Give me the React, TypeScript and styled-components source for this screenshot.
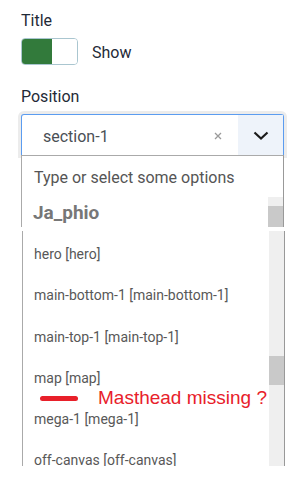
import * as React from "react";
import styled, { createGlobalStyle } from "styled-components";

const GlobalStyle = createGlobalStyle`
  html, body {
    margin: 0;
    padding: 0;
    background: #fff;
    font-family: Roboto, "Noto Sans", Arial, sans-serif;
  }
`;

const options = [
  "hero [hero]",
  "main-bottom-1 [main-bottom-1]",
  "main-top-1 [main-top-1]",
  "map [map]",
  "mega-1 [mega-1]",
  "off-canvas [off-canvas]",
];

const App = (): JSX.Element => {
  return (
    <>
      <GlobalStyle />
      <Page>
        <Label>Title</Label>
        <ToggleRow>
          <Toggle>
            <ToggleOn />
            <ToggleOff />
          </Toggle>
          <ToggleText>Show</ToggleText>
        </ToggleRow>

        <Label style={{ marginTop: 22 }}>Position</Label>
        <Select>
          <SelectValue>section-1</SelectValue>
          <ClearBtn>
            <svg width="8" height="8" viewBox="0 0 8 8">
              <path d="M1 1 L7 7 M7 1 L1 7" stroke="#9a9a9a" strokeWidth="1.3" />
            </svg>
          </ClearBtn>
          <ChevronBtn>
            <svg width="16" height="9" viewBox="0 0 16 9">
              <path
                d="M1.5 1.5 L8 7.5 L14.5 1.5"
                fill="none"
                stroke="#1b1b1b"
                strokeWidth="2.2"
              />
            </svg>
          </ChevronBtn>
        </Select>

        <MenuTop>
          <SearchRow>Type or select some options</SearchRow>
          <ScrollRow>
            <GroupHeader>Ja_phio</GroupHeader>
            <Track height={30}>
              <Thumb offset={9} size={21} />
            </Track>
          </ScrollRow>
        </MenuTop>

        <MenuBottom>
          <OptionList>
            {options.map((o) => (
              <Option key={o}>{o}</Option>
            ))}
          </OptionList>
          <Track height={235}>
            <Thumb offset={125} size={29} />
          </Track>
          <Annotation>
            <RedDash />
            <RedNote>Masthead missing ?</RedNote>
          </Annotation>
        </MenuBottom>
      </Page>
    </>
  );
};

export default App;

const Page = styled.div`
  padding: 11px 0 0 21px;
  width: 264px;
  color: #1f2a37;
`;

const Label = styled.div`
  font-size: 16px;
  line-height: 20px;
  margin-bottom: 7px;
  color: #1f2a37;
`;

const ToggleRow = styled.div`
  display: flex;
  align-items: center;
  height: 27px;
`;

const Toggle = styled.div`
  display: flex;
  width: 55px;
  height: 25px;
  border: 1px solid #aac6d0;
  border-radius: 4px;
  overflow: hidden;
`;

const ToggleOn = styled.div`
  width: 30px;
  background: #327a3b;
`;

const ToggleOff = styled.div`
  flex: 1;
  background: #fff;
`;

const ToggleText = styled.div`
  margin-left: 14px;
  padding-top: 2px;
  font-size: 16px;
  line-height: 20px;
`;

const Select = styled.div`
  display: flex;
  align-items: stretch;
  height: 40px;
  width: 261px;
  border: 1px solid #5b9cf0;
  border-bottom: none;
  border-radius: 3px 3px 0 0;
  box-shadow: 0 0 0 3px #ececec;
  background: #fff;
  position: relative;
  z-index: 0;
`;

const SelectValue = styled.div`
  flex: 1;
  padding: 3px 0 0 21px;
  display: flex;
  align-items: center;
  font-size: 16px;
  color: #4a4f55;
`;

const ClearBtn = styled.div`
  width: 24px;
  display: flex;
  align-items: center;
  justify-content: flex-start;
  padding-top: 2px;
`;

const ChevronBtn = styled.div`
  width: 45px;
  background: #eef3fa;
  display: flex;
  align-items: center;
  justify-content: center;
  padding-top: 1px;
`;

const MenuTop = styled.div`
  position: relative;
  z-index: 1;
  width: 261px;
  border: 1px solid #aaa;
  border-right-color: #999;
  border-bottom: none;
  background: #fff;
`;

const SearchRow = styled.div`
  height: 41px;
  line-height: 41px;
  padding: 1px 0 0 12px;
  box-sizing: border-box;
  font-size: 16px;
  color: #555;
`;

const ScrollRow = styled.div`
  display: flex;
  height: 30px;
  overflow: hidden;
`;

const GroupHeader = styled.div`
  flex: 1;
  padding: 1px 0 0 11px;
  line-height: 30px;
  font-size: 19px;
  font-weight: 700;
  color: #777;
`;

const Track = styled.div<{ height: number }>`
  width: 15px;
  height: ${({ height }) => height}px;
  background: #efefef;
  flex-shrink: 0;
`;

const Thumb = styled.div<{ offset: number; size: number }>`
  margin-top: ${({ offset }) => offset}px;
  height: ${({ size }) => size}px;
  background: #c9c9c9;
`;

const MenuBottom = styled.div`
  position: relative;
  display: flex;
  margin: 4px 0 0 1px;
  width: 261px;
  height: 235px;
  border-left: 1px solid #aaa;
  border-right: 1px solid #999;
  background: #fff;
`;

const OptionList = styled.div`
  flex: 1;
  padding-top: 3px;
`;

const Option = styled.div`
  height: 41.3px;
  line-height: 41.3px;
  padding-left: 11px;
  font-size: 14px;
  color: #585858;
  white-space: nowrap;
  &:last-child {
    height: 20px;
    line-height: 20px;
    padding-top: 10px;
  }
`;

const Annotation = styled.div`
  position: absolute;
  left: 17px;
  top: 157px;
  display: flex;
  align-items: flex-start;
`;

const RedDash = styled.div`
  margin-top: 8px;
  width: 38px;
  height: 5px;
  border-radius: 3px;
  background: #e8202a;
`;

const RedNote = styled.div`
  margin-left: 20px;
  font-family: "Liberation Sans", Arial, sans-serif;
  font-size: 19px;
  line-height: 19px;
  color: #e8202a;
  white-space: nowrap;
`;
